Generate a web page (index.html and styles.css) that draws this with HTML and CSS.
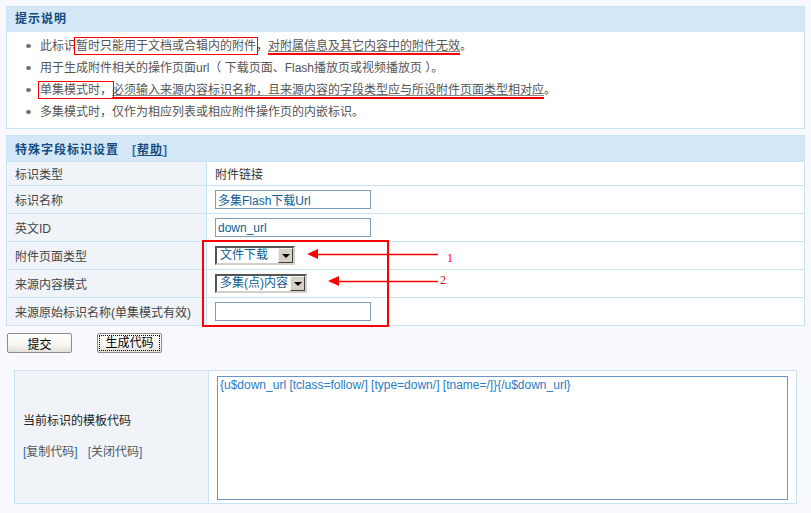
FILE: index.html
```html
<!DOCTYPE html>
<html lang="zh-CN">
<head>
    <meta charset="UTF-8">
    <title>特殊字段标识设置</title>
    <link rel="stylesheet" href="styles.css">
</head>
<body>
    <div class="page">
        <div class="panel">
            <div class="panel-title">提示说明</div>
            <ul class="tip-list">
                <li>此标识<span class="mark-box">暂时只能用于文档或合辑内的附件</span>，<span class="mark-line">对附属信息及其它内容中的附件无效</span>。</li>
                <li>用于生成附件相关的操作页面url（ 下载页面、Flash播放页或视频播放页 ）。</li>
                <li><span class="mark-box">单集模式时，</span><span class="mark-line">必须输入来源内容标识名称，且来源内容的字段类型应与所设附件页面类型相对应</span>。</li>
                <li>多集模式时，仅作为相应列表或相应附件操作页的内嵌标识。</li>
            </ul>
        </div>

        <table class="form-table">
            <tr class="head-row">
                <th colspan="2">特殊字段标识设置 &nbsp; <span class="bracket">[</span><a href="#" class="help">帮助</a><span class="bracket">]</span></th>
            </tr>
            <tr class="short-row">
                <td class="label">标识类型</td>
                <td class="value">附件链接</td>
            </tr>
            <tr>
                <td class="label">标识名称</td>
                <td class="value"><input class="text-input" type="text" value="多集Flash下载Url"></td>
            </tr>
            <tr>
                <td class="label">英文ID</td>
                <td class="value"><input class="text-input" type="text" value="down_url"></td>
            </tr>
            <tr>
                <td class="label">附件页面类型</td>
                <td class="value">
                    <div class="combo combo-page"><span class="combo-text">文件下载</span><span class="combo-btn"></span></div>
                </td>
            </tr>
            <tr>
                <td class="label">来源内容模式</td>
                <td class="value">
                    <div class="combo combo-mode"><span class="combo-text">多集(点)内容</span><span class="combo-btn"></span></div>
                </td>
            </tr>
            <tr>
                <td class="label">来源原始标识名称(单集模式有效)</td>
                <td class="value"><input class="text-input" type="text" value=""></td>
            </tr>
        </table>

        <div class="actions">
            <button class="btn">提交</button>
            <button class="btn btn-focus"><span>生成代码</span></button>
        </div>

        <table class="code-table">
            <tr>
                <td class="code-label">
                    <p class="code-title">当前标识的模板代码</p>
                    <p class="code-links"><a href="#"><span class="bracket">[</span>复制代码<span class="bracket">]</span></a><a href="#"><span class="bracket">[</span>关闭代码<span class="bracket">]</span></a></p>
                </td>
                <td class="code-value">
                    <textarea class="code-box">{u$down_url [tclass=follow/] [type=down/] [tname=/]}{/u$down_url}</textarea>
                </td>
            </tr>
        </table>

        <!-- red notes drawn over the form -->
        <svg class="notes" width="260" height="90" viewBox="0 0 260 90">
            <rect x="1" y="1" width="185" height="85" fill="none" stroke="#f00" stroke-width="2"/>
            <polygon points="105,14 116,9 116,19" fill="#f00"/>
            <line x1="115" y1="14.5" x2="236" y2="14.5" stroke="#f00" stroke-width="1.3"/>
            <text x="245" y="22" class="note-num">1</text>
            <polygon points="126,41 137,36 137,46" fill="#f00"/>
            <line x1="136" y1="41.5" x2="236" y2="41.5" stroke="#f00" stroke-width="1.3"/>
            <text x="238" y="44" class="note-num">2</text>
        </svg>
    </div>
</body>
</html>
```

FILE: styles.css
```css
body {
    margin: 0;
    background-color: #f8f9fe;
    font-family: "Liberation Sans", "Noto Sans CJK SC", sans-serif;
    font-size: 12px;
    color: #333;
}

.page {
    position: relative;
    padding: 6px;
}

a {
    text-decoration: none;
}

.bracket {
    color: #2a6fb5;
}

/* tips panel */
.panel {
    border: 1px solid #c9e3f5;
    background-color: #fff;
    width: 797px;
}

.panel-title {
    height: 25px;
    line-height: 24px;
    padding-left: 8px;
    background-color: #d4e7f7;
    color: #134b7d;
    font-weight: bold;
    letter-spacing: 1px;
}

.tip-list {
    list-style: none;
    margin: 0;
    padding: 3px 0 5px 33px;
    color: #555;
}

.tip-list li {
    position: relative;
    line-height: 22px;
    height: 22px;
}

.tip-list li::before {
    content: "";
    position: absolute;
    left: -14px;
    top: 9px;
    width: 5px;
    height: 4px;
    border-radius: 50%;
    background-color: #6a6f78;
}

.mark-box {
    outline: 1px solid #f00;
    outline-offset: 1px;
}

.mark-line {
    text-decoration: underline;
    text-decoration-color: #888;
    border-bottom: 2px solid #f00;
}

/* field settings table */
.form-table {
    margin-top: 6px;
    width: 799px;
    border-collapse: collapse;
    border: 1px solid #c9e3f5;
    background-color: #fff;
}

.form-table th {
    height: 25px;
    padding: 0 0 0 8px;
    text-align: left;
    background-color: #d4e7f7;
    color: #134b7d;
    font-weight: bold;
    letter-spacing: 1px;
}

.form-table .help {
    color: #134b7d;
    text-decoration: underline;
}

.form-table td {
    height: 27px;
    padding: 0;
    border-top: 1px solid #c9e3f5;
}

.form-table .short-row td {
    height: 23px;
}

.form-table .label {
    width: 191px;
    padding-left: 8px;
    background-color: #f0f4f8;
    border-right: 1px solid #c9e3f5;
    color: #444;
}

.form-table .value {
    padding-left: 8px;
    color: #333;
}

.text-input {
    display: block;
    box-sizing: border-box;
    width: 156px;
    height: 19px;
    margin: 0;
    padding: 0 2px;
    border: 1px solid #7f9db9;
    font-family: "Liberation Sans", "Noto Sans CJK SC", sans-serif;
    font-size: 12px;
    color: #0e5e96;
    background-color: #fff;
}

/* old style drop-down boxes */
.combo {
    display: flex;
    align-items: center;
    box-sizing: border-box;
    height: 19px;
    border: 2px solid;
    border-color: #555 #d4d0c8 #d4d0c8 #555;
    background-color: #fff;
}

.combo-page {
    width: 80px;
}

.combo-mode {
    width: 92px;
}

.combo-text {
    flex: 1;
    padding-left: 3px;
    color: #0e5e96;
    line-height: 15px;
    white-space: nowrap;
}

.combo-btn {
    position: relative;
    box-sizing: border-box;
    width: 15px;
    height: 15px;
    background-color: #d4d0c8;
    border: 1px solid;
    border-color: #f4f3ee #404040 #404040 #f4f3ee;
}

.combo-btn::after {
    content: "";
    position: absolute;
    left: 3px;
    top: 5px;
    border-left: 4px solid transparent;
    border-right: 4px solid transparent;
    border-top: 4px solid #000;
}

/* buttons */
.actions {
    display: flex;
    gap: 25px;
    margin: 7px 0 0 1px;
}

.btn {
    box-sizing: border-box;
    width: 65px;
    height: 20px;
    padding: 0;
    border: 1px solid #8c8c8c;
    border-radius: 2px;
    background: linear-gradient(#ffffff, #f6f5f0 60%, #e2e0d8);
    font-family: "Liberation Sans", "Noto Sans CJK SC", sans-serif;
    font-size: 12px;
    color: #000;
}

.btn-focus span {
    display: block;
    margin: 1px;
    line-height: 14px;
    border: 1px dotted #000;
}

/* template code area */
.code-table {
    margin: 17px 0 0 8px;
    width: 783px;
    border-collapse: collapse;
    border: 1px solid #c9e3f5;
}

.code-label {
    width: 186px;
    padding: 0 0 0 8px;
    background-color: #f0f4f8;
    border-right: 1px solid #c9e3f5;
    vertical-align: middle;
}

.code-title {
    margin: 0 0 14px;
    line-height: 17px;
    color: #222;
}

.code-links {
    margin: 0;
    line-height: 17px;
    color: #555;
}

.code-links a {
    color: #555;
    margin-right: 10px;
}

.code-value {
    padding: 5px 8px 3px 8px;
    background-color: #fff;
}

.code-box {
    display: block;
    box-sizing: border-box;
    width: 571px;
    height: 124px;
    margin: 0;
    padding: 1px 2px;
    border: 1px solid #6b94c4;
    resize: none;
    font-family: "Liberation Sans", sans-serif;
    font-size: 12px;
    color: #2a7cc4;
}

/* annotations */
.notes {
    position: absolute;
    left: 202px;
    top: 240px;
}

.note-num {
    font-family: "Liberation Serif", serif;
    font-size: 12px;
    fill: #f00;
}
```
